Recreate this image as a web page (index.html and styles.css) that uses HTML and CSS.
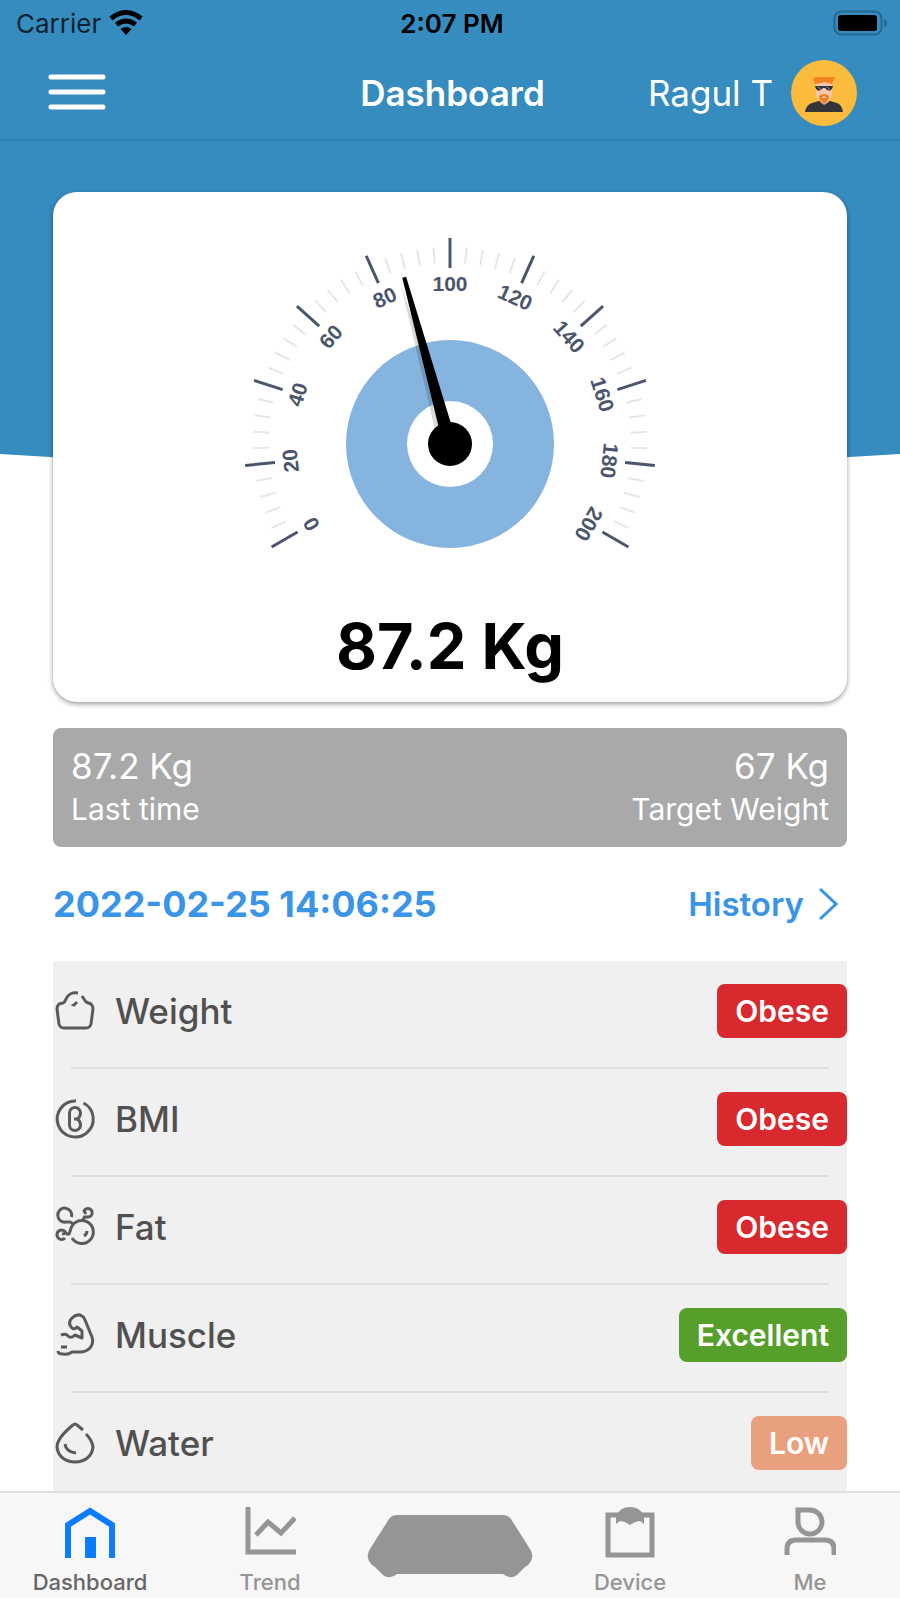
FILE: index.html
```html
<!DOCTYPE html>
<html lang="en">
<head>
    <meta charset="UTF-8" />
    <meta name="viewport" content="width=device-width, initial-scale=1.0" />
    <title>Dashboard</title>
    <link rel="stylesheet" href="styles.css">
</head>
<body>
    <div class="hero-bg"></div>

    <div class="status-bar">
        <div class="carrier">
            <span>Carrier</span>
            <svg width="34" height="26" viewBox="0 0 34 26">
                <path d="M17 25 L11.5 19 Q17 15 22.5 19 Z" />
                <path d="M7.5 14.5 Q17 7.5 26.5 14.5" fill="none" stroke="#000" stroke-width="5" />
                <path d="M2 8.5 Q17 -3.5 32 8.5" fill="none" stroke="#000" stroke-width="5" />
            </svg>
        </div>
        <span class="time">2:07 PM</span>
        <svg class="battery" width="55" height="26" viewBox="0 0 55 26">
            <rect x="1.5" y="1.5" width="47" height="23" rx="7" fill="none" stroke="#27688f" stroke-width="2" />
            <rect x="5" y="5" width="39" height="16" rx="3" />
            <path d="M51 9 Q54 10 54 13 Q54 16 51 17 Z" fill="#27688f" />
        </svg>
    </div>

    <header class="top-bar">
        <button class="menu-btn" aria-label="Menu">
            <svg width="58" height="38" viewBox="0 0 58 38">
                <path d="M3 3 H55 M3 18 H55 M3 33 H55" fill="none" stroke="#fff" stroke-width="5" stroke-linecap="round" />
            </svg>
        </button>
        <h1>Dashboard</h1>
        <a class="profile" href="#">
            <span>Ragul T</span>
            <svg width="66" height="66" viewBox="0 0 66 66">
                <circle cx="33" cy="33" r="33" fill="#fbbc3d" />
                <path d="M14 52 Q15 45 21 43 L28 41 H39 L46 43 Q51 45 52 52 Z" fill="#353539" />
                <path d="M29 37 H38 V42 L33 45 L29 42 Z" fill="#e9a184" />
                <path d="M25 22 H41 V33 Q41 39 37 41 Q33 43 29 41 Q25 39 25 33 Z" fill="#fbc6a9" />
                <path d="M28 36 Q33 32 38 36 Q38 41 33 43 Q28 41 28 36 Z" fill="#f07f26" />
                <path d="M31 37 Q33 36 35 37 Q33 39 31 37 Z" fill="#fff" />
                <path d="M24 24 L22 18 L26 17 H44 L42 21 L41 24 L34 22 Z" fill="#f5811f" />
                <path d="M24 26 H42 L41 29 Q38 33 34 28 H32 Q28 33 25 29 Z" fill="#34353d" />
                <path d="M36 27 L39 30 M27 27 L30 30" stroke="#8d929b" stroke-width="1" />
            </svg>
        </a>
    </header>

    <main>
        <section class="gauge-card">
            <svg class="gauge" width="440" height="350" viewBox="-220 -223 440 350" role="img" aria-label="Weight gauge">
                <circle r="104" fill="#85b4de" />
                <circle r="43" fill="#fff" />
                <g id="ticks"></g>
                <g id="needle">
                    <path class="needle-shadow" d="M-5 -170 L-11 -10 H2 Z" />
                    <path d="M-2 -173 L-7 0 H7 L2 -173 Z" />
                </g>
                <circle r="22" />
            </svg>
            <p class="weight">87.2 Kg</p>
        </section>

        <section class="summary">
            <div>
                <strong>87.2 Kg</strong>
                <span>Last time</span>
            </div>
            <div class="target">
                <strong>67 Kg</strong>
                <span>Target Weight</span>
            </div>
        </section>

        <div class="date-row">
            <h2>2022-02-25 14:06:25</h2>
            <a href="#">
                History
                <svg width="20" height="32" viewBox="0 0 20 32">
                    <path d="M2 1 L18 16 L2 31" fill="none" stroke="currentColor" stroke-width="3" />
                </svg>
            </a>
        </div>

        <ul class="metrics">
            <li>
                <svg viewBox="0 0 40 40">
                    <path d="M23 2 C18 1 13 3 11 8 Q10 11 8 12 L4 13 Q2 15 2 18 L4 33 Q5 37 9 37 H31 Q35 37 36 33 L38 18 Q38 15 36 13 L31 11 L27 5" />
                    <path d="M18 15 L22 11 M18 15 L18 13" />
                </svg>
                <span class="name">Weight</span>
                <span class="badge obese">Obese</span>
            </li>
            <li>
                <svg viewBox="0 0 40 40">
                    <path d="M28.5 4 A18 18 0 1 1 21 2" />
                    <path d="M19 20 H22 Q25.5 18 25.5 14 A5.5 5.5 0 0 0 14.5 14 V26 A5.5 5.5 0 0 0 25.5 26 Q25.5 22 22 20" />
                </svg>
                <span class="name">BMI</span>
                <span class="badge obese">Obese</span>
            </li>
            <li>
                <svg viewBox="0 0 40 40">
                    <path d="M17 31 A11.5 11.5 0 1 0 15.5 23 L14 27 L11 27" />
                    <path d="M16.500 10 A7 7 0 1 0 11 15 L15 15 L19 17" />
                    <path d="M30 9 A4.300 4.300 0 1 0 29 4 L31 7 M30 9 L28 13" />
                    <path d="M10 31 A4.700 4.700 0 1 1 11 26 L7 27" />
                    <path d="M32 24 Q32 27 29 29" />
                </svg>
                <span class="name">Fat</span>
                <span class="badge obese">Obese</span>
            </li>
            <li>
                <svg viewBox="0 0 40 40">
                    <path d="M6 20 Q11 18 13 21 Q16 24 20 20 L27 23 V16 L22 12 Q19 15 17 13 Q12 8 17 3 Q22 -2 27 1 Q29 2 30 5 L37 22 Q39 28 35 33 Q31 37 25 37 H17 Q13 40 8 39 Q3 39 3 36" />
                    <path d="M6 32 H12" />
                </svg>
                <span class="name">Muscle</span>
                <span class="badge excellent">Excellent</span>
            </li>
            <li>
                <svg viewBox="0 0 40 40">
                    <path d="M28 7 L22 2 Q20 0 18 2 Q2 15 2 24 C3 34 11 39 20 39 S37 34 38 24 Q37 17 31 11" />
                    <path d="M10 21 Q11 29 21 30" />
                </svg>
                <span class="name">Water</span>
                <span class="badge low">Low</span>
            </li>
        </ul>
    </main>

    <nav class="tab-bar">
        <a class="active" href="#">
            <svg width="52" height="52" viewBox="0 0 52 52">
                <path d="M4 51 V18 L26 4 L48 18 V51" fill="none" stroke="#0a7cff" stroke-width="6" />
                <rect x="21" y="30" width="11" height="21" fill="#0a7cff" />
            </svg>
            Dashboard
        </a>
        <a href="#">
            <svg width="52" height="52" viewBox="0 0 52 52">
                <path d="M4 0 V45 H52" fill="none" stroke="#959595" stroke-width="5" />
                <path d="M12 28 L24 15 L37 26 L51 11" fill="none" stroke="#959595" stroke-width="5" />
            </svg>
            Trend
        </a>
        <a class="scale" href="#" aria-label="Scale">
            <svg width="166" height="64" viewBox="0 0 166 64">
                <path d="M30 0 H136 Q141 0 144 4 L163 34 Q167 40 164 46 Q162 50 158 52 L150 60 Q143 65 136 59 H30 Q23 65 16 60 L8 52 Q4 50 2 46 Q-1 40 3 34 L22 4 Q25 0 30 0 Z" fill="#959595" />
            </svg>
        </a>
        <a href="#">
            <svg width="52" height="52" viewBox="0 0 52 52">
                <path d="M4 8 H48 V48 H4 Z" fill="none" stroke="#959595" stroke-width="5" />
                <path d="M12 9 Q16 0 26 0 Q36 0 40 9 V17 L36 14 L31 15 L26 18 L21 15 L16 14 L12 17 Z" fill="#959595" />
            </svg>
            Device
        </a>
        <a href="#">
            <svg width="52" height="52" viewBox="0 0 52 52">
                <path d="M14 3 H26 A12 12 0 1 1 14 15 Z" fill="none" stroke="#959595" stroke-width="5" />
                <path d="M3 48 V42 Q3 33 12 33 H41 Q50 33 50 42 V48" fill="none" stroke="#959595" stroke-width="5" />
            </svg>
            Me
        </a>
    </nav>

    <script>
        const ticks = document.getElementById('ticks');
        const maxWeight = 200;
        const weight = 87.2;

        function toAngle(value) {
            return -120 + value * 240 / maxWeight;
        }

        function addNode(name, attrs) {
            const node = document.createElementNS('http://www.w3.org/2000/svg', name);
            for (const key in attrs) {
                node.setAttribute(key, attrs[key]);
            }
            ticks.appendChild(node);
            return node;
        }

        for (let value = 0; value <= maxWeight; value += 4) {
            const rotate = 'rotate(' + toAngle(value) + ')';
            if (value % 20 === 0) {
                addNode('line', { class: 'major', y1: -206, y2: -176, transform: rotate });
                addNode('text', { y: -153, transform: rotate }).textContent = value;
            } else {
                addNode('line', { class: 'minor', y1: -197, y2: -181, transform: rotate });
            }
        }

        document.getElementById('needle').setAttribute('transform', 'rotate(' + toAngle(weight) + ')');
    </script>
</body>
</html>
```
FILE: styles.css
```css
* {
    box-sizing: border-box;
}
body {
    font-family: Inter, "Liberation Sans", sans-serif;
    background: #fff;
    margin: 0;
    height: 100vh;
    display: flex;
    flex-direction: column;
    position: relative;
    overflow: hidden;
}
h1, h2, p, ul {
    margin: 0;
    padding: 0;
}
a {
    color: inherit;
    text-decoration: none;
}
svg {
    display: block;
    flex: none;
}
/* blue backdrop with a shallow curved bottom edge */
.hero-bg {
    position: absolute;
    z-index: -1;
    top: 0;
    left: 0;
    width: 100%;
    height: 468px;
    background: #368cbf;
    clip-path: ellipse(206% 468px at 50% 0);
}
.status-bar {
    display: grid;
    grid-template-columns: 1fr auto 1fr;
    align-items: center;
    height: 46px;
    padding: 0 12px 0 16px;
    font-size: 26px;
    flex: none;
}
.carrier {
    display: flex;
    align-items: center;
    gap: 8px;
    color: #0c2230;
}
.time {
    font-weight: 600;
}
.battery {
    justify-self: end;
}
.top-bar {
    display: grid;
    grid-template-columns: 1fr auto 1fr;
    align-items: center;
    height: 95px;
    padding: 0 43px 0 48px;
    border-bottom: 2px solid #3182b3;
    color: #fff;
    flex: none;
}
.top-bar h1 {
    font-size: 35px;
    font-weight: 600;
}
.menu-btn {
    justify-self: start;
    background: none;
    border: none;
    padding: 0;
    cursor: pointer;
}
.profile {
    justify-self: end;
    display: flex;
    align-items: center;
    gap: 18px;
    font-size: 35px;
}
main {
    flex: 1;
    min-height: 0;
    overflow-y: auto;
    scrollbar-width: none;
    padding: 51px 53px 0;
}
.gauge-card {
    display: flex;
    flex-direction: column;
    align-items: center;
    gap: 36px;
    padding: 29px 0 17px;
    background: #fff;
    border-radius: 24px;
    box-shadow: 0 2px 5px rgba(0,0,0,0.4);
}
.gauge text {
    font-family: "Liberation Sans", Arial, sans-serif;
    font-size: 21px;
    font-weight: bold;
    text-anchor: middle;
    fill: #4b556b;
}
.major {
    stroke: #4b556b;
    stroke-width: 3;
}
.minor {
    stroke: #e6e6e6;
    stroke-width: 2;
}
.needle-shadow {
    fill: rgba(0,0,0,0.15);
}
.weight {
    font-size: 63px;
    line-height: 78px;
    font-weight: 700;
}
.summary {
    display: flex;
    justify-content: space-between;
    margin-top: 26px;
    padding: 16px 18px;
    border-radius: 8px;
    background: #a9a9a9;
    color: #fff;
}
.summary div {
    display: flex;
    flex-direction: column;
}
.summary strong {
    font-size: 35px;
    line-height: 44px;
    font-weight: 400;
}
.summary span {
    font-size: 30px;
    line-height: 43px;
}
.target {
    text-align: right;
}
.date-row {
    display: flex;
    justify-content: space-between;
    align-items: center;
    height: 114px;
    padding-right: 9px;
    color: #3a94e8;
}
.date-row h2 {
    font-size: 36px;
    font-weight: 700;
}
.date-row a {
    display: flex;
    align-items: center;
    gap: 14px;
    font-size: 33px;
    font-weight: 600;
}
.metrics {
    list-style: none;
    background: #f0f0f0;
}
.metrics li {
    display: flex;
    align-items: center;
    gap: 20px;
    padding: 23px 0 31px 2px;
    background: linear-gradient(#dedede, #dedede) center bottom / calc(100% - 36px) 2px no-repeat;
}
.metrics svg {
    width: 40px;
    height: 40px;
    overflow: visible;
    fill: none;
    stroke: #5a5a5a;
    stroke-width: 3;
    stroke-linejoin: round;
}
.name {
    flex: 1;
    font-size: 35px;
    line-height: 54px;
    font-weight: 500;
    color: #505050;
}
.badge {
    padding: 0 18px;
    border-radius: 8px;
    font-size: 30px;
    line-height: 54px;
    font-weight: 600;
    color: #fff;
}
.obese {
    background: #d8292f;
}
.excellent {
    background: #569f2b;
}
.low {
    background: #e9a07e;
}
.tab-bar {
    display: grid;
    grid-template-columns: repeat(5, 1fr);
    align-items: start;
    flex: none;
    height: 107px;
    padding-top: 14px;
    border-top: 2px solid #e0e0e0;
    background: #f7f7f7;
}
.tab-bar a {
    display: flex;
    flex-direction: column;
    align-items: center;
    gap: 12px;
    font-size: 22px;
    line-height: 22px;
    font-weight: 500;
    color: #959595;
}
.tab-bar .active {
    color: #666;
}
.tab-bar .scale {
    padding-top: 8px;
}
```
